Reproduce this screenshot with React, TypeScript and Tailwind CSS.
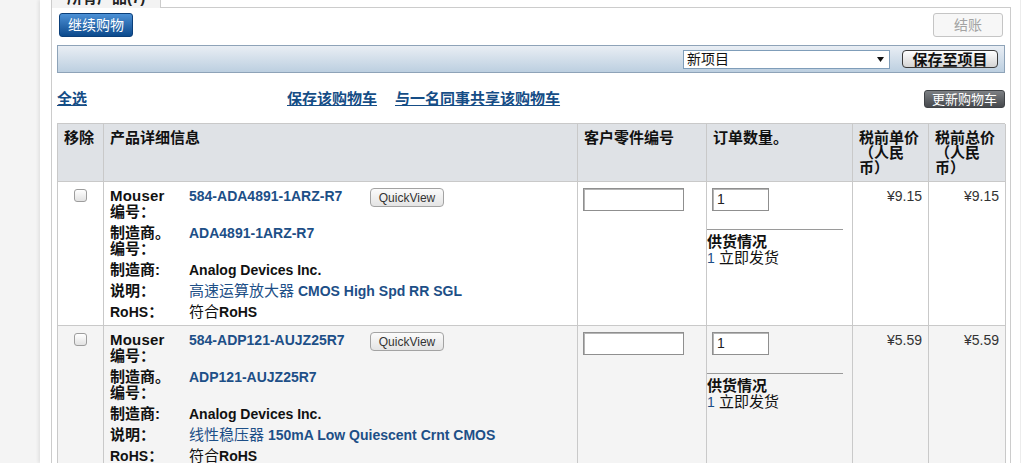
import React from "react";

const items = [
  {
    part: "584-ADA4891-1ARZ-R7",
    mfrPart: "ADA4891-1ARZ-R7",
    descZh: "高速运算放大器",
    descEn: "CMOS High Spd RR SGL",
    price: "¥9.15",
  },
  {
    part: "584-ADP121-AUJZ25R7",
    mfrPart: "ADP121-AUJZ25R7",
    descZh: "线性稳压器",
    descEn: "150mA Low Quiescent Crnt CMOS",
    price: "¥5.59",
  },
];

function Checkbox() {
  return (
    <span className="block h-[13px] w-[13px] rounded-[3px] border border-[#9d9d9d] bg-linear-to-b from-white to-[#e2e2e2]" />
  );
}

function QuickView() {
  return (
    <button className="flex h-[19px] w-[74px] items-center justify-center rounded-[4px] border border-[#a3a3a3] bg-linear-to-b from-[#fbfbfb] to-[#e4e4e4] text-[12px] text-[#333]">
      QuickView
    </button>
  );
}

function DetailRow({ label, children }: { label: React.ReactNode; children: React.ReactNode }) {
  return (
    <div className="flex">
      <div className="w-[79px] shrink-0 pr-[6px] font-bold text-[#111]">{label}</div>
      <div className="flex-1">{children}</div>
    </div>
  );
}

function ItemRow({ item, shaded }: { item: (typeof items)[number]; shaded: boolean }) {
  const bg = shaded ? "bg-[#f4f4f4]" : "bg-white";
  const cell = `border-r border-b border-[#c9c9c9] ${bg}`;
  return (
    <>
      <div className={`${cell} flex justify-center pt-[7px]`}>
        <Checkbox />
      </div>
      <div className={`${cell} flex flex-col gap-[5px] pt-[6px] pb-[5px] pl-[6px] text-[14px] leading-[16px]`}>
        <DetailRow
          label={
            <>
              <span className="text-[15px] tracking-[0.2px]">Mouser</span>{" "}
              <span className="whitespace-nowrap text-[15px]">编号：</span>
            </>
          }
        >
          <div className="flex items-start">
            <span className="w-[181px] font-bold text-[#1d4f87]">{item.part}</span>
            <QuickView />
          </div>
        </DetailRow>
        <DetailRow label={<span className="text-[15px]">制造商。编号：</span>}>
          <span className="font-bold text-[#1d4f87]">{item.mfrPart}</span>
        </DetailRow>
        <DetailRow label={<span className="text-[15px]">制造商:</span>}>
          <span className="font-bold text-[#111]">Analog Devices Inc.</span>
        </DetailRow>
        <DetailRow label={<span className="text-[15px]">说明：</span>}>
          <span className="text-[#1d4f87]">
            <span className="text-[15px]">{item.descZh}</span>{" "}
            <span className="font-bold">{item.descEn}</span>
          </span>
        </DetailRow>
        <DetailRow
          label={
            <>
              RoHS<span className="text-[15px]">：</span>
            </>
          }
        >
          <span className="text-[#111]">
            <span className="text-[15px]">符合</span>
            <span className="font-bold">RoHS</span>
          </span>
        </DetailRow>
      </div>
      <div className={`${cell} pt-[5px] pl-[5px]`}>
        <input
          className="h-[23px] w-[101px] border border-[#8f8f8f] bg-white shadow-[inset_1px_1px_0_#b5b5b5]"
          readOnly
        />
      </div>
      <div className={`${cell} pt-[5px]`}>
        <input
          className="ml-[5px] h-[23px] w-[57px] border border-[#8f8f8f] bg-white pl-[4px] text-[14px] text-[#222] shadow-[inset_1px_1px_0_#b5b5b5]"
          value="1"
          readOnly
        />
        <div className="mt-[18px] w-[136px] border-t border-[#9a9a9a] pt-[4px] text-[15px] leading-[16px] text-[#111]">
          <div className="font-bold">供货情况</div>
          <div>
            <span className="text-[14px] text-[#1d4f87]">1</span> 立即发货
          </div>
        </div>
      </div>
      <div className={`${cell} pt-[6px] pr-[6px] text-right text-[14px] leading-[16px] text-[#333]`}>{item.price}</div>
      <div className={`${cell} pt-[6px] pr-[6px] text-right text-[14px] leading-[16px] text-[#333]`}>{item.price}</div>
    </>
  );
}

export default function App() {
  const head = "border-r border-b border-[#c9c9c9] bg-[#dfe2e6] h-[58px] pl-[6px] pr-[5px] pt-[6px] font-bold text-[15px] leading-[15px] text-[#111]";
  return (
    <div className="flex h-[463px] w-[1022px] overflow-hidden bg-white font-['Liberation_Sans','Noto_Sans_CJK_SC',sans-serif]">
      <div className="w-[40px] shrink-0 bg-[#f4f4f4]" />
      <div className="w-[981px] shrink-0 border-r border-[#ececec] pl-[11px] shadow-[-2px_0_3px_rgba(0,0,0,0.07)]">
        <div className="-mt-[14px] w-[960px]">
          {/* tab strip, mostly scrolled out of view */}
          <div className="flex h-[22px]">
            <div className="w-[110px] border-x border-[#cccccc] bg-[#f3f3f3] pt-[4px] pl-[15px] text-[15px] leading-[16px] font-bold text-[#222]">
              所有产品(7)
            </div>
            <div className="h-px flex-1 self-end bg-[#cccccc]" />
          </div>

          <div className="h-[460px] border-x border-[#cccccc] px-[5px] pt-[5px]">
            <div className="flex justify-between px-[2px]">
              <button className="h-[24px] w-[74px] rounded-[3px] border border-[#0b3f7a] bg-linear-to-b from-[#4c91d6] to-[#0a4a8d] text-[14px] text-white">
                继续购物
              </button>
              <button className="h-[24px] w-[70px] rounded-[3px] border border-[#c5c5c5] bg-[#f7f7f7] text-[14px] text-[#a3a3a3]">
                结账
              </button>
            </div>

            <div className="mt-[8px] flex h-[28px] items-center justify-end gap-[12px] border border-[#8ea3b8] bg-linear-to-b from-[#e9eef4] to-[#bccfe0] pr-[6px]">
              <div className="flex h-[19px] w-[207px] items-center justify-between border border-[#7f9db9] bg-white pl-[3px] pr-[5px] text-[14px] leading-none text-[#111]">
                <span>新项目</span>
                <svg width="7" height="5" viewBox="0 0 7 5">
                  <path d="M0 0h7L3.5 5z" fill="#111" />
                </svg>
              </div>
              <button className="flex h-[18px] w-[96px] items-center justify-center rounded-[4px] border border-[#3a3a3a] bg-linear-to-b from-white to-[#d4d4d4] text-[15px] leading-none font-bold text-[#111]">
                保存至项目
              </button>
            </div>

            <div className="mt-[17px] flex h-[18px] items-center text-[15px] font-bold text-[#154d86]">
              <a className="w-[230px] underline">全选</a>
              <a className="underline">保存该购物车</a>
              <a className="ml-[18px] underline">与一名同事共享该购物车</a>
              <button className="ml-auto h-[18px] w-[81px] rounded-[3px] border border-[#3f4246] bg-linear-to-b from-[#7d8084] to-[#46494d] text-[13px] leading-none font-normal text-white">
                更新购物车
              </button>
            </div>

            <div className="mt-[15px] grid grid-cols-[46px_474px_129px_146px_76px_77px] border-l border-t border-[#c9c9c9]">
              <div className={head}>移除</div>
              <div className={head}>产品详细信息</div>
              <div className={head}>客户零件编号</div>
              <div className={head}>订单数量。</div>
              <div className={head}>税前单价（人民币）</div>
              <div className={head}>税前总价（人民币）</div>
              {items.map((item, i) => (
                <ItemRow key={item.part} item={item} shaded={i % 2 === 1} />
              ))}
            </div>
          </div>
        </div>
      </div>
    </div>
  );
}
